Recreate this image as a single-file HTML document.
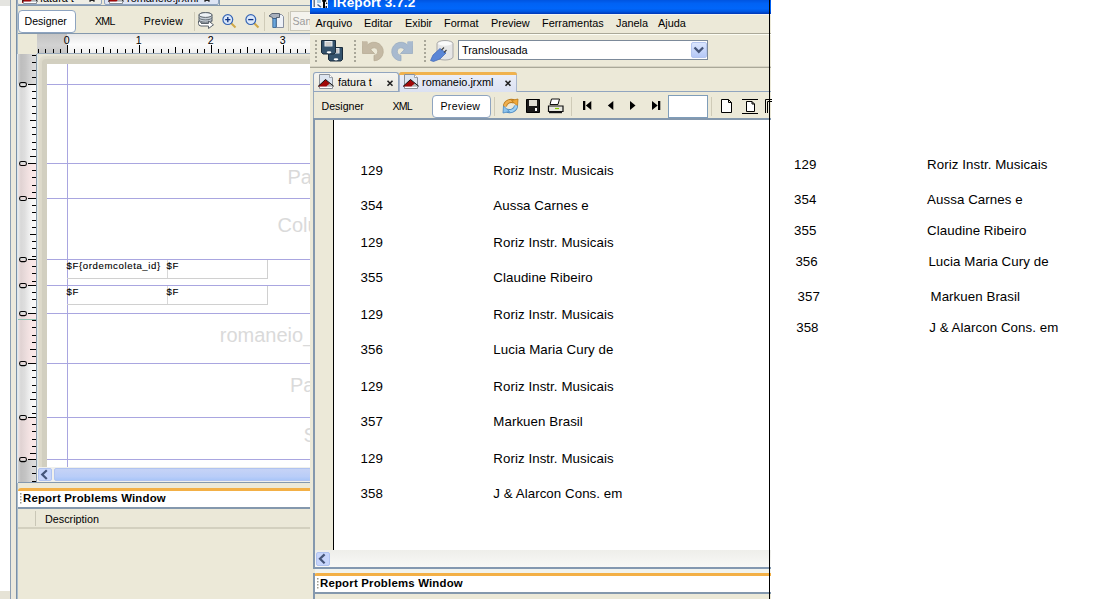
<!DOCTYPE html>
<html><head><meta charset="utf-8">
<style>
*{box-sizing:border-box;margin:0;padding:0}
html,body{width:1106px;height:599px;overflow:hidden;background:#fff;font-family:"Liberation Sans",sans-serif;color:#000;position:relative}
.a{position:absolute}
.t{position:absolute;white-space:nowrap;line-height:1}
svg{position:absolute;overflow:visible}
</style></head><body>

<!-- ===================== BACK WINDOW ===================== -->
<div class="a" id="back" style="left:0;top:0;width:310px;height:599px;background:#ece9d8;overflow:hidden">
  <!-- far-left strip -->
  <div class="a" style="left:0;top:0;width:10px;height:591px;background:#fff"></div>
  <div class="a" style="left:0;top:0;width:10px;height:6px;background:#e4e4e0"></div>
  <div class="a" style="left:0;top:591px;width:10px;height:8px;background:#e6e3d6"></div>
  <div class="a" style="left:10px;top:0;width:1px;height:599px;background:#8d9fb3"></div>
  <div class="a" style="left:11px;top:0;width:5px;height:599px;background:#ece9dc"></div>
  <div class="a" style="left:16px;top:0;width:1px;height:599px;background:#7a8fa6"></div><div class="a" style="left:17px;top:0;width:1px;height:599px;background:#a9bccb"></div>

  <!-- back tabs (cut off) -->
  <div class="a" style="left:18px;top:5px;width:292px;height:1px;background:#8498ad"></div><div class="a" style="left:219px;top:0;width:1px;height:5px;background:#8498ad"></div><div class="a" style="left:220px;top:0;width:90px;height:5px;background:#eceadc"></div><div class="a" style="left:18px;top:6px;width:292px;height:1px;background:#fafaf6"></div>
  <div class="a" style="left:17px;top:-12px;width:85px;height:17px;background:#eeede5;border:1px solid #91a5bf;border-radius:0 0 2px 2px"></div>
  <div class="a" style="left:104px;top:-12px;width:115px;height:17px;background:#dde4f4;border:1px solid #91a5bf;border-radius:0 0 2px 2px"></div>
  <div class="a" style="left:22px;top:0;width:14px;height:3px;background:#b31616"></div>
  <div class="a" style="left:109px;top:0;width:14px;height:3px;background:#b31616"></div>

  <!-- designer toolbar -->
  <div class="a" style="left:18px;top:6px;width:292px;height:27px;background:#ece9d8"></div>
  <div class="a" style="left:18px;top:33px;width:292px;height:1px;background:#8498ad"></div>
  <div class="a" style="left:18px;top:10px;width:58px;height:23px;background:#fff;border:1px solid #8ea4c0;border-radius:4px"></div>
  <div class="t" style="left:24.5px;top:16px;font-size:10.6px">Designer</div>
  <div class="t" style="left:95px;top:16px;font-size:10.6px;letter-spacing:-0.75px">XML</div>
  <div class="t" style="left:143.7px;top:16px;font-size:10.6px;letter-spacing:0.25px">Preview</div>
  <div class="a" style="left:194px;top:12px;width:1px;height:19px;background:#cfcbb8"></div>
  <div class="a" style="left:264px;top:12px;width:1px;height:19px;background:#cfcbb8"></div>
  <div class="a" style="left:288px;top:12px;width:1px;height:19px;background:#cfcbb8"></div>
  <div class="a" style="left:290px;top:11px;width:30px;height:20px;background:#f4f3ee;border:1px solid #c9c7ba"></div>
  <div class="t" style="left:292.5px;top:16px;font-size:10.6px;color:#9c9c9c">San</div>

  <!-- horizontal ruler -->
  <div class="a" style="left:37px;top:34px;width:273px;height:19px;background:linear-gradient(#e6e6e6,#fbfbfb 55%,#f0f0f0)"></div>
  <div class="a" style="left:37px;top:34px;width:30px;height:19px;background:linear-gradient(#c4c4c4,#d2d2d2 60%,#c6c6c6)"></div>
  <div class="a" style="left:37px;top:53px;width:273px;height:1px;background:#9aaabb"></div>

  <!-- vertical ruler -->
  <div class="a" style="left:18px;top:54px;width:19px;height:429px;background:linear-gradient(90deg,#ececec 0,#d8d8d8 15%,#dedede 35%,#f6f6f6 70%,#fbfbfb 100%)"></div>

  <!-- page shadow + page -->
  <div class="a" style="left:37px;top:54px;width:273px;height:413px;background:#e9e6d6;overflow:hidden">
    <div class="a" style="left:2px;top:2px;width:400px;height:600px;border-radius:6px;background:#e2ded0;box-shadow:0 0 3px 1px #e8e5d6"></div>
    <div class="a" style="left:5px;top:5px;width:400px;height:600px;border-radius:4px;background:#d2cfc0;box-shadow:0 0 3px 2px #dbd8c9"></div>
  </div>
  <div class="a" style="left:47px;top:64px;width:263px;height:403px;background:#fff"></div>
<!--DESIGN-->
<div class="a" style="left:18px;top:54px;width:19px;height:30px;background:linear-gradient(90deg,#d4d4d4 0,#bdbdbd 15%,#c4c4c4 40%,#d8d8d8 75%,#dedede 100%)"></div>
<div class="a" style="left:18px;top:459px;width:19px;height:24px;background:linear-gradient(90deg,#d4d4d4 0,#bdbdbd 15%,#c4c4c4 40%,#d8d8d8 75%,#dedede 100%)"></div>
<div class="a" style="left:18px;top:164px;width:19px;height:35px;background:linear-gradient(90deg,#f0e6e6 0,#e0d2d2 15%,#e8dada 35%,#f8e6e6 70%,#fce8e8 100%)"></div>
<div class="a" style="left:18px;top:260px;width:19px;height:26px;background:linear-gradient(90deg,#f0e6e6 0,#e0d2d2 15%,#e8dada 35%,#f8e6e6 70%,#fce8e8 100%)"></div>
<div class="a" style="left:18px;top:314px;width:19px;height:50px;background:linear-gradient(90deg,#f0e6e6 0,#e0d2d2 15%,#e8dada 35%,#f8e6e6 70%,#fce8e8 100%)"></div>
<div class="a" style="left:18px;top:418px;width:19px;height:42px;background:linear-gradient(90deg,#f0e6e6 0,#e0d2d2 15%,#e8dada 35%,#f8e6e6 70%,#fce8e8 100%)"></div>
<div class="a" style="left:18px;top:319px;width:19px;height:1px;background:#8fc0b0"></div>
<div class="a" style="left:17px;top:54px;width:1px;height:429px;background:#dce8f0"></div>
<div class="a" style="left:36px;top:54px;width:1px;height:429px;background:#8a9aa8"></div><div class="a" style="left:37px;top:54px;width:1px;height:413px;background:#dce8ec"></div>
<svg style="left:0;top:0" width="310" height="599" shape-rendering="crispEdges">
<path d="M38.5 49V53 M45.5 49V53 M53.5 49V53 M60.5 49V53 M67.5 45V53 M74.5 49V53 M81.5 49V53 M89.5 49V53 M96.5 49V53 M103.5 47V53 M110.5 49V53 M117.5 49V53 M125.5 49V53 M132.5 49V53 M139.5 45V53 M146.5 49V53 M153.5 49V53 M161.5 49V53 M168.5 49V53 M175.5 47V53 M182.5 49V53 M189.5 49V53 M197.5 49V53 M204.5 49V53 M211.5 45V53 M218.5 49V53 M225.5 49V53 M233.5 49V53 M240.5 49V53 M247.5 47V53 M254.5 49V53 M261.5 49V53 M269.5 49V53 M276.5 49V53 M283.5 45V53 M290.5 49V53 M297.5 49V53 M305.5 49V53 M32 77.5H36 M32 70.5H36 M32 62.5H36 M32 55.5H36 M28 84.5H36 M32 91.5H36 M32 98.5H36 M32 106.5H36 M32 113.5H36 M30 120.5H36 M32 127.5H36 M32 134.5H36 M32 142.5H36 M32 149.5H36 M30 156.5H36 M28 163.5H36 M32 170.5H36 M32 177.5H36 M32 185.5H36 M32 192.5H36 M28 198.5H36 M32 205.5H36 M32 212.5H36 M32 220.5H36 M32 227.5H36 M30 234.5H36 M32 241.5H36 M32 248.5H36 M32 256.5H36 M28 259.5H36 M32 266.5H36 M32 273.5H36 M32 281.5H36 M28 285.5H36 M32 292.5H36 M32 299.5H36 M32 307.5H36 M28 313.5H36 M32 320.5H36 M32 327.5H36 M32 335.5H36 M32 342.5H36 M30 349.5H36 M32 356.5H36 M28 363.5H36 M32 370.5H36 M32 377.5H36 M32 385.5H36 M32 392.5H36 M30 399.5H36 M32 406.5H36 M32 413.5H36 M28 417.5H36 M32 424.5H36 M32 431.5H36 M32 439.5H36 M32 446.5H36 M30 453.5H36 M28 459.5H36 M32 466.5H36 M32 473.5H36 M32 481.5H36" stroke="#000" stroke-width="1" fill="none"/>
</svg>
<svg style="left:0;top:0" width="310" height="599">
<text x="66.7" y="43.9" font-size="10.6" font-family="Liberation Sans" text-anchor="middle">0</text>
<text x="138.7" y="43.9" font-size="10.6" font-family="Liberation Sans" text-anchor="middle">1</text>
<text x="210.7" y="43.9" font-size="10.6" font-family="Liberation Sans" text-anchor="middle">2</text>
<text x="282.7" y="43.9" font-size="10.6" font-family="Liberation Sans" text-anchor="middle">3</text>
<rect x="19.6" y="82.4" width="6.8" height="4.2" rx="1.8" fill="none" stroke="#000" stroke-width="1.05"/>
<rect x="19.6" y="161.4" width="6.8" height="4.2" rx="1.8" fill="none" stroke="#000" stroke-width="1.05"/>
<rect x="19.6" y="196.4" width="6.8" height="4.2" rx="1.8" fill="none" stroke="#000" stroke-width="1.05"/>
<rect x="19.6" y="257.4" width="6.8" height="4.2" rx="1.8" fill="none" stroke="#000" stroke-width="1.05"/>
<rect x="19.6" y="283.4" width="6.8" height="4.2" rx="1.8" fill="none" stroke="#000" stroke-width="1.05"/>
<rect x="19.6" y="311.4" width="6.8" height="4.2" rx="1.8" fill="none" stroke="#000" stroke-width="1.05"/>
<rect x="19.6" y="361.4" width="6.8" height="4.2" rx="1.8" fill="none" stroke="#000" stroke-width="1.05"/>
<rect x="19.6" y="415.4" width="6.8" height="4.2" rx="1.8" fill="none" stroke="#000" stroke-width="1.05"/>
<rect x="19.6" y="457.4" width="6.8" height="4.2" rx="1.8" fill="none" stroke="#000" stroke-width="1.05"/>
</svg>
<svg style="left:0;top:0" width="310" height="599" shape-rendering="crispEdges">
<path d="M47 84.5H310 M47 163.5H310 M47 198.5H310 M47 259.5H310 M47 285.5H310 M47 313.5H310 M47 363.5H310 M47 417.5H310 M47 459.5H310 M67.5 64V467" stroke="#a9a6e0" stroke-width="1" fill="none"/>
<path d="M167.5 260V278.5H67 M267.5 260V278.5H167 M167.5 286V304.5H67 M267.5 286V304.5H167" stroke="#d0d0d0" stroke-width="1" fill="none"/>
<path d="M167.5 260V278 M167.5 286V304" stroke="#d8d8d8" stroke-width="1" fill="none"/>
</svg>
<div class="t" style="left:287.5px;top:166.5px;font-size:20px;color:#dadada">Page Header</div>
<div class="t" style="left:277.5px;top:214.6px;font-size:20px;color:#dadada">Column Header</div>
<div class="t" style="left:219.8px;top:324.7px;font-size:20px;color:#dadada">romaneio_</div>
<div class="t" style="left:290.0px;top:375px;font-size:20px;color:#dadada">Page Footer</div>
<div class="t" style="left:303.5px;top:424.5px;font-size:20px;color:#dadada">Summary</div>
<div class="t" style="left:66.5px;top:261.2px;font-size:9.6px;letter-spacing:0.62px;-webkit-text-stroke:0.12px #000">$F{ordemcoleta_id}</div>
<div class="t" style="left:166.5px;top:261.2px;font-size:9.6px;letter-spacing:0.62px;-webkit-text-stroke:0.12px #000">$F</div>
<div class="t" style="left:66.5px;top:287.2px;font-size:9.6px;letter-spacing:0.62px;-webkit-text-stroke:0.12px #000">$F</div>
<div class="t" style="left:166.5px;top:287.2px;font-size:9.6px;letter-spacing:0.62px;-webkit-text-stroke:0.12px #000">$F</div>
<!--/DESIGN-->

  <!-- scrollbar -->
  <div class="a" style="left:37px;top:467px;width:273px;height:16px;background:#f0f0ec"></div>
  <div class="a" style="left:38px;top:468px;width:14px;height:13px;background:#c7d5fb;border:1px solid #b0c3f0;border-radius:2px"></div>
  <div class="a" style="left:54px;top:468px;width:260px;height:13px;background:linear-gradient(#c6d3f6,#b9cdf8 70%,#aac6f8);border:1px solid #b0c3f0;border-radius:2px"></div>
  <div class="a" style="left:18px;top:482px;width:292px;height:1px;background:#8498ad"></div>

  <!-- report problems window -->
  <div class="a" style="left:18px;top:488px;width:292px;height:3px;background:#f3b046;border-radius:3px 0 0 0"></div>
  <div class="a" style="left:18px;top:491px;width:292px;height:16px;background:#fff"></div>
  <div class="a" style="left:18px;top:507px;width:292px;height:2px;background:#8498ad"></div>
  <div class="t" style="left:23px;top:493px;font-size:11.4px;font-weight:bold;letter-spacing:0.2px">Report Problems Window</div>
  <div class="a" style="left:18px;top:509px;width:292px;height:19px;background:#ebe8d8"></div>
  <div class="a" style="left:18px;top:527px;width:292px;height:2px;background:#d3d0bf"></div>
  <div class="a" style="left:35px;top:511px;width:1px;height:15px;background:#c9c6b6"></div>
  <div class="t" style="left:45px;top:514px;font-size:10.8px">Description</div>
<!--BACKICONS-->
<svg style="left:0;top:0" width="310" height="599">
  <!-- back tab labels (cut) -->
  <text x="40" y="1.6" font-size="10.9" font-family="Liberation Sans">fatura t</text>
  <text x="127" y="1.6" font-size="10.9" font-family="Liberation Sans">romaneio.jrxml</text>
  <path d="M89.5 -3.5L94.5 1.5 M94.5 -3.5L89.5 1.5" stroke="#222" stroke-width="1.6"/>
  <path d="M204.5 -3.5L209.5 1.5 M209.5 -3.5L204.5 1.5" stroke="#222" stroke-width="1.6"/>
  <!-- db icon -->
  <g stroke="#5c646c" stroke-width="1">
    <path d="M199 15A6.5 2.4 0 0 1 212 15V21A6.5 2.4 0 0 1 199 21Z" fill="#c8d0d8"/>
    <ellipse cx="205.5" cy="15" rx="6.5" ry="2.4" fill="#eef2f6"/>
    <path d="M199 17.5A6.5 2.4 0 0 0 212 17.5 M199 19.8A6.5 2.4 0 0 0 212 19.8" fill="none" stroke-width="0.9"/>
    <path d="M201 23.5H208.5V21L213.5 24.8L208.5 28.5V26H201A2.5 2.5 0 0 1 198.5 23.5V21" fill="#fff" stroke-linejoin="round"/>
  </g>
  <!-- zoom in -->
  <g>
    <path d="M231 23L235.5 27.5" stroke="#d0a848" stroke-width="2"/>
    <circle cx="227.8" cy="19.6" r="4.9" fill="#dbe8fa" stroke="#3464b4" stroke-width="1.2"/>
    <path d="M225.2 19.6H230.4 M227.8 17V22.2" stroke="#0c3080" stroke-width="1.3"/>
  </g>
  <!-- zoom out -->
  <g>
    <path d="M254 23L258.5 27.5" stroke="#d0a848" stroke-width="2"/>
    <circle cx="250.8" cy="19.6" r="4.9" fill="#dbe8fa" stroke="#3464b4" stroke-width="1.2"/>
    <path d="M248.2 19.6H253.4" stroke="#0c3080" stroke-width="1.3"/>
  </g>
  <!-- hammer -->
  <g>
    <path d="M276.5 14.5H281.5L283.5 16.5V27.5H276.5Z" fill="#eef2f8" stroke="#8890a0" stroke-width="1"/>
    <path d="M269 16L272 13.5H279.5V17.5H276.5V18.5H272.5V17.5Z" fill="#a8b0bc" stroke="#4c5868" stroke-width="0.9" stroke-linejoin="round"/>
    <path d="M272.8 18.5H276.2V27.5H272.8Z" fill="#6aa6dc" stroke="#305c8c" stroke-width="0.8"/>
  </g>
  <!-- scrollbar chevron back -->
  <path d="M46.8 470.2L42.2 474.6L46.8 479" stroke="#46567a" stroke-width="2.2" fill="none"/>
  <!-- grip dots report problems back -->
  <g fill="#9c9a8c"><rect x="20" y="493" width="1.5" height="1.5"/><rect x="20" y="496" width="1.5" height="1.5"/><rect x="20" y="499" width="1.5" height="1.5"/><rect x="20" y="502" width="1.5" height="1.5"/></g>
</svg>

<!--/BACKICONS-->
</div>

<!-- ===================== FRONT WINDOW ===================== -->
<div class="a" id="front" style="left:310px;top:0;width:461px;height:599px;background:#ece9d8;overflow:hidden">
  <!-- title bar -->
  <div class="a" style="left:0;top:0;width:461px;height:14px;background:linear-gradient(#0054e0 0,#0062f4 25%,#0066fa 60%,#005ae6 80%,#0036b4 100%)"></div><div class="a" style="left:0;top:14px;width:461px;height:1px;background:#f4f4f0"></div>
  <div class="t" style="left:23px;top:-4.3px;font-size:13.6px;font-weight:bold;color:#fff;letter-spacing:0.05px">iReport 3.7.2</div>

  <!-- menu -->
  <div class="t" style="left:5.5px;top:18px;font-size:10.9px">Arquivo</div>
  <div class="t" style="left:54px;top:18px;font-size:10.9px">Editar</div>
  <div class="t" style="left:95px;top:18px;font-size:10.9px">Exibir</div>
  <div class="t" style="left:134px;top:18px;font-size:10.9px">Format</div>
  <div class="t" style="left:181px;top:18px;font-size:10.9px">Preview</div>
  <div class="t" style="left:232px;top:18px;font-size:10.9px">Ferramentas</div>
  <div class="t" style="left:306px;top:18px;font-size:10.9px">Janela</div>
  <div class="t" style="left:348px;top:18px;font-size:10.9px">Ajuda</div>
  <div class="a" style="left:0;top:33px;width:461px;height:1px;background:#aaa898"></div>
  <div class="a" style="left:0;top:34px;width:461px;height:1px;background:#fcfdf4"></div>

  <!-- main toolbar -->
  <div class="a" style="left:0;top:66px;width:461px;height:1px;background:#d6d3c4"></div><div class="a" style="left:0;top:67px;width:461px;height:1px;background:#aaa898"></div>
  <div class="a" style="left:148px;top:40px;width:250px;height:20px;background:#fff;border:1px solid #7c8a9a"></div>
  <div class="t" style="left:152px;top:45px;font-size:10.9px">Translousada</div>
  <div class="a" style="left:381px;top:42px;width:16px;height:16px;background:linear-gradient(#dbe6fd,#b5c8f6);border:1px solid #b4c5ef;border-radius:2px"></div>

  <!-- editor tabs -->
  <div class="a" style="left:3px;top:72px;width:86px;height:20px;background:linear-gradient(#f5f4ef,#e9e7dd);border:1px solid #91a5bf;border-bottom:none;border-radius:3px 3px 0 0"></div>
  <div class="t" style="left:28px;top:77px;font-size:10.9px">fatura t</div>
  <div class="a" style="left:89px;top:72px;width:118px;height:20px;background:linear-gradient(#eceff8,#dbe1f2);border:1px solid #a9b6cc;border-bottom:none;border-radius:3px 3px 0 0"></div>
  <div class="a" style="left:89px;top:72px;width:118px;height:3px;background:#f0b24e;border-radius:3px 3px 0 0"></div>
  <div class="t" style="left:112px;top:77px;font-size:10.9px">romaneio.jrxml</div>
  <div class="a" style="left:3px;top:91px;width:86px;height:1px;background:#91a5bf"></div>
  <div class="a" style="left:207px;top:91px;width:254px;height:1px;background:#91a5bf"></div>

  <!-- designer toolbar -->
  <div class="a" style="left:3px;top:92px;width:1px;height:27px;background:#9aaaba"></div><div class="a" style="left:3px;top:118px;width:2px;height:451px;background:#8498ad"></div>
  <div class="t" style="left:11.5px;top:100.5px;font-size:10.6px">Designer</div>
  <div class="t" style="left:82.5px;top:100.5px;font-size:10.6px;letter-spacing:-0.85px">XML</div>
  <div class="a" style="left:122px;top:95px;width:59px;height:23px;background:#fff;border:1px solid #8ea4c0;border-radius:4px"></div>
  <div class="t" style="left:130.5px;top:100.5px;font-size:10.6px;letter-spacing:0.3px">Preview</div>
  <div class="a" style="left:184px;top:97px;width:1px;height:19px;background:#cfcbb8"></div>
  <div class="a" style="left:261px;top:97px;width:1px;height:19px;background:#cfcbb8"></div>
  <div class="a" style="left:358px;top:95px;width:40px;height:23px;background:#fff;border:1px solid #7f9db9"></div>
  <div class="a" style="left:401px;top:97px;width:1px;height:19px;background:#cfcbb8"></div>
  <div class="a" style="left:3px;top:118px;width:458px;height:2px;background:#8498ad"></div>

  <!-- preview content -->
  <div class="a" style="left:5px;top:120px;width:456px;height:430px;background:#fff"></div>
  <div class="a" style="left:5px;top:120px;width:18px;height:430px;background:#ece9d8"></div>
  <div class="a" style="left:23px;top:120px;width:1px;height:430px;background:#000"></div>

  <!-- scrollbar -->
  <div class="a" style="left:5px;top:550px;width:456px;height:17px;background:linear-gradient(#eeeeea,#f8f8f6)"></div>
  <div class="a" style="left:6px;top:552px;width:14px;height:14px;background:#c7d5fb;border:1px solid #b0c3f0;border-radius:2px"></div>
  <div class="a" style="left:3px;top:567px;width:458px;height:2px;background:#8398b0"></div><div class="a" style="left:5px;top:569px;width:456px;height:4px;background:#f1f3ee"></div>

  <!-- report problems -->
  <div class="a" style="left:4px;top:573px;width:457px;height:3px;background:#f3b046;border-radius:3px 0 0 0"></div>
  <div class="a" style="left:4px;top:576px;width:457px;height:16px;background:#fff"></div>
  <div class="a" style="left:4px;top:592px;width:457px;height:2px;background:#8498ad"></div>
  <div class="a" style="left:3px;top:573px;width:2px;height:26px;background:#8498ad"></div>
  <div class="t" style="left:10px;top:578px;font-size:11.4px;font-weight:bold;letter-spacing:0.2px">Report Problems Window</div>
</div>
<div class="a" style="left:769px;top:0;width:1px;height:599px;background:#000"></div>

<!--FRONTICONS-->
<svg style="left:0;top:0" width="1106" height="599">
  <!-- title icon -->
  <rect x="312" y="0" width="16" height="8" fill="#f2f6fc"/>
  <path d="M314.2 0V7" stroke="#4a5870" stroke-width="1.2"/>
  <rect x="317" y="0" width="4" height="3" fill="#a8cce8"/>
  <path d="M317.5 4.5L321 7.2" stroke="#3a5a90" stroke-width="1.4"/>
  <path d="M322.2 0H326.2V1.8H325V8H323V1.8H322.2Z" fill="#000"/>
  <circle cx="326.6" cy="3.3" r="0.8" fill="#000"/>
  <rect x="325.5" y="6" width="1.5" height="2" fill="#102040"/>
  <!-- grips -->
  <g fill="#a9a799">
    <rect x="315" y="40" width="2" height="2"/><rect x="315" y="44" width="2" height="2"/><rect x="315" y="48" width="2" height="2"/><rect x="315" y="52" width="2" height="2"/><rect x="315" y="56" width="2" height="2"/><rect x="315" y="60" width="2" height="2"/>
    <rect x="354" y="40" width="2" height="2"/><rect x="354" y="44" width="2" height="2"/><rect x="354" y="48" width="2" height="2"/><rect x="354" y="52" width="2" height="2"/><rect x="354" y="56" width="2" height="2"/><rect x="354" y="60" width="2" height="2"/>
    <rect x="424" y="40" width="2" height="2"/><rect x="424" y="44" width="2" height="2"/><rect x="424" y="48" width="2" height="2"/><rect x="424" y="52" width="2" height="2"/><rect x="424" y="56" width="2" height="2"/><rect x="424" y="60" width="2" height="2"/>
  </g>
  <!-- save all (two floppies) -->
  <g>
    <path d="M328.5 47.5H342.5V59.5L341 61H330L328.5 59.5Z" fill="#34526c" stroke="#1a2c3c" stroke-width="1"/>
    <rect x="331.5" y="48" width="8" height="5.5" fill="#dfe7ef"/>
    <path d="M332.5 50H338.5 M332.5 52H338.5" stroke="#a89c90" stroke-width="0.8"/>
    <ellipse cx="336" cy="59.3" rx="2.4" ry="1.1" fill="#fff"/>
    <path d="M321.5 40.5H335.5V52.5L334 54H323L321.5 52.5Z" fill="#34526c" stroke="#1a2c3c" stroke-width="1"/>
    <rect x="324.5" y="41" width="8" height="5.5" fill="#e8eef4"/>
    <path d="M325.5 43H331.5 M325.5 45H331.5" stroke="#a89c90" stroke-width="0.8"/>
    <ellipse cx="329" cy="52.3" rx="2.4" ry="1.1" fill="#fff"/>
  </g>
  <!-- undo -->
  <g id="undo" fill="#c4b9a4" stroke="#b3a891" stroke-width="0.7" stroke-linejoin="round">
    <path d="M362.5 41.5L362.5 53.5L374.5 53.5Z"/>
    <path d="M365.26 48.32A9.3 9.3 0 1 1 374 60.8L374 55.3A3.8 3.8 0 1 0 370.43 50.2Z"/>
    <path d="M363.2 42.5L363.2 52.8L373.5 52.8Z" stroke="none"/><rect x="362.3" y="41.2" width="5.5" height="5" rx="1.2" stroke="none"/>
  </g>
  <!-- redo -->
  <g transform="translate(775,0) scale(-1,1)" fill="#a8bacf" stroke="#93a7bf" stroke-width="0.7" stroke-linejoin="round">
    <path d="M362.5 41.5L362.5 53.5L374.5 53.5Z"/>
    <path d="M365.26 48.32A9.3 9.3 0 1 1 374 60.8L374 55.3A3.8 3.8 0 1 0 370.43 50.2Z"/>
    <path d="M363.2 42.5L363.2 52.8L373.5 52.8Z" stroke="none"/><rect x="362.3" y="41.2" width="5.5" height="5" rx="1.2" stroke="none"/>
  </g>
  <!-- db connection -->
  <g>
    <path d="M437 43.5A8 3 0 0 1 453 43.5V57A8 3 0 0 1 437 57Z" fill="#e6e6e6" stroke="#a8a8a8" stroke-width="1"/>
    <ellipse cx="445" cy="43.5" rx="7" ry="2.2" fill="#fafafa"/>
    <path d="M430.5 60.5L433 55L440 48.5L446 53L440 59L433.5 61.5Z" fill="#5a86d6" stroke="#3c64b4" stroke-width="0.7"/>
    <path d="M441.5 50L444 47.5 M444 52.5L446.5 50" stroke="#444" stroke-width="1.2"/>
  </g>
  <!-- combo arrow -->
  <path d="M694.5 47.5L698.8 51.8L703.1 47.5" stroke="#46567a" stroke-width="2.3" fill="none"/>

  <!-- tab icons -->
  <g id="docicon">
    <path d="M319.5 74.5H329.5L332.5 77.5V88.5H319.5Z" fill="#dde5f0" stroke="#8a9098" stroke-width="1"/>
    <path d="M329.5 74.5V77.5H332.5" fill="#fff" stroke="#8a9098" stroke-width="0.8"/>
    <path d="M318 86.5L325.5 79.5L330 83.5L326.5 86.5Z" fill="#a00808"/>
    <path d="M326.5 86.5L330 83.5L333.5 86.5Z" fill="#b0b0b0"/>
    <path d="M318 86.5L325.5 79.5L333.8 86.3" stroke="#111" stroke-width="1" fill="none"/>
    <rect x="320" y="87" width="12" height="1" fill="#fff"/>
  </g>
  <use href="#docicon" x="85" y="0"/>
  <use href="#docicon" x="-296" y="-85"/>
  <use href="#docicon" x="-210" y="-85"/>
  <!-- close x -->
  <path d="M387.5 80.8L392.5 85.8 M392.5 80.8L387.5 85.8" stroke="#222" stroke-width="1.6"/>
  <path d="M505.5 80.8L510.5 85.8 M510.5 80.8L505.5 85.8" stroke="#222" stroke-width="1.6"/>

  <!-- refresh -->
  <path d="M505 106.5A6.2 5.6 0 0 1 514.5 101.8" stroke="#b87818" stroke-width="4" fill="none"/>
  <path d="M505 106.5A6.2 5.6 0 0 1 514.5 101.8" stroke="#f0b050" stroke-width="2.4" fill="none"/>
  <path d="M511.5 100.5L518 99L517.5 106Z" fill="#f0a838" stroke="#b87818" stroke-width="0.8" stroke-linejoin="round"/>
  <path d="M516 105.5A6.2 5.6 0 0 1 506.5 110.2" stroke="#4a88c0" stroke-width="4" fill="none"/>
  <path d="M516 105.5A6.2 5.6 0 0 1 506.5 110.2" stroke="#9cd0f4" stroke-width="2.4" fill="none"/>
  <path d="M509.5 111.5L503 113L503.5 106Z" fill="#8cc4ee" stroke="#4a88c0" stroke-width="0.8" stroke-linejoin="round"/>
  <!-- floppy -->
  <path d="M526.5 99.5H539.5V112.5H526.5Z" fill="#1a1a1a" stroke="#000"/>
  <rect x="529" y="100" width="8" height="6" fill="#e0dfd6"/>
  <rect x="535" y="108" width="2" height="3" fill="#fff"/>
  <!-- printer -->
  <path d="M551.5 99L559.5 99L558 104.5L550 104.5Z" fill="#fff" stroke="#111" stroke-width="1"/>
  <path d="M548.5 106H563V111.5H548.5Z" fill="#e8e8e0" stroke="#111" stroke-width="1.2"/>
  <path d="M549 112.5H562" stroke="#111" stroke-width="1.4"/>
  <path d="M555 108.5H559" stroke="#8c0" stroke-width="1.2"/>
  <!-- nav -->
  <path d="M583 101H585.3V110H583Z M591.3 101V110L585.8 105.5Z" fill="#000"/>
  <path d="M613.3 101V110L607.8 105.5Z" fill="#000"/>
  <path d="M630 101V110L635.5 105.5Z" fill="#000"/>
  <path d="M652 101V110L657.7 105.5Z M658 101H660.3V110H658Z" fill="#000"/>
  <!-- page icons -->
  <path d="M721.5 99.5H728.5L731.5 102.5V112.5H721.5Z M728.5 99.5V102.5H731.5" fill="#fff" stroke="#000" stroke-width="1"/>
  <path d="M742 99.5H758 M742 113.5H758" stroke="#000" stroke-width="1"/>
  <path d="M746.5 101.5H752L754.5 104V111.5H746.5Z M752 101.5V104H754.5" fill="#fff" stroke="#000" stroke-width="1"/>
  <path d="M765.5 113V99.5H772 M767.5 113V101.5H772" stroke="#000" stroke-width="1" fill="none"/>

  <!-- scrollbar chevron front -->
  <path d="M324.6 554.4L320 558.8L324.6 563.2" stroke="#46567a" stroke-width="2.2" fill="none"/>
  <!-- report problems grip front -->
  <g fill="#9c9a8c"><rect x="317" y="578" width="1.5" height="1.5"/><rect x="317" y="581" width="1.5" height="1.5"/><rect x="317" y="584" width="1.5" height="1.5"/><rect x="317" y="587" width="1.5" height="1.5"/></g>
</svg>

<!--/FRONTICONS-->
<!-- TEXT ROWS -->
<div class="a" style="left:0;top:0;font-size:13.3px;letter-spacing:0.065px">
<div class="t" style="left:360.6px;top:164.0px">129</div><div class="t" style="left:493.3px;top:164.0px">Roriz Instr. Musicais</div>
<div class="t" style="left:360.6px;top:199.0px">354</div><div class="t" style="left:493.3px;top:199.0px">Aussa Carnes e</div>
<div class="t" style="left:360.6px;top:236.0px">129</div><div class="t" style="left:493.3px;top:236.0px">Roriz Instr. Musicais</div>
<div class="t" style="left:360.6px;top:271.0px">355</div><div class="t" style="left:493.3px;top:271.0px">Claudine Ribeiro</div>
<div class="t" style="left:360.6px;top:308.2px">129</div><div class="t" style="left:493.3px;top:308.2px">Roriz Instr. Musicais</div>
<div class="t" style="left:360.6px;top:342.8px">356</div><div class="t" style="left:493.3px;top:342.8px">Lucia Maria Cury de</div>
<div class="t" style="left:360.6px;top:379.5px">129</div><div class="t" style="left:493.3px;top:379.5px">Roriz Instr. Musicais</div>
<div class="t" style="left:360.6px;top:415.3px">357</div><div class="t" style="left:493.3px;top:415.3px">Markuen Brasil</div>
<div class="t" style="left:360.6px;top:451.9px">129</div><div class="t" style="left:493.3px;top:451.9px">Roriz Instr. Musicais</div>
<div class="t" style="left:360.6px;top:486.5px">358</div><div class="t" style="left:493.3px;top:486.5px">J &amp; Alarcon Cons. em</div>
</div>
<div class="a" style="left:0;top:0;font-size:13.3px;letter-spacing:0.065px">
<div class="t" style="left:794.1px;top:157.6px">129</div><div class="t" style="left:927.1px;top:157.6px">Roriz Instr. Musicais</div>
<div class="t" style="left:794.1px;top:193.2px">354</div><div class="t" style="left:927.1px;top:193.2px">Aussa Carnes e</div>
<div class="t" style="left:794.1px;top:223.9px">355</div><div class="t" style="left:927.1px;top:223.9px">Claudine Ribeiro</div>
<div class="t" style="left:795.4px;top:254.7px">356</div><div class="t" style="left:928.4px;top:254.7px">Lucia Maria Cury de</div>
<div class="t" style="left:797.5px;top:289.5px">357</div><div class="t" style="left:930.5px;top:289.5px">Markuen Brasil</div>
<div class="t" style="left:796.2px;top:320.7px">358</div><div class="t" style="left:929.2px;top:320.7px">J &amp; Alarcon Cons. em</div>
</div>
</body></html>
